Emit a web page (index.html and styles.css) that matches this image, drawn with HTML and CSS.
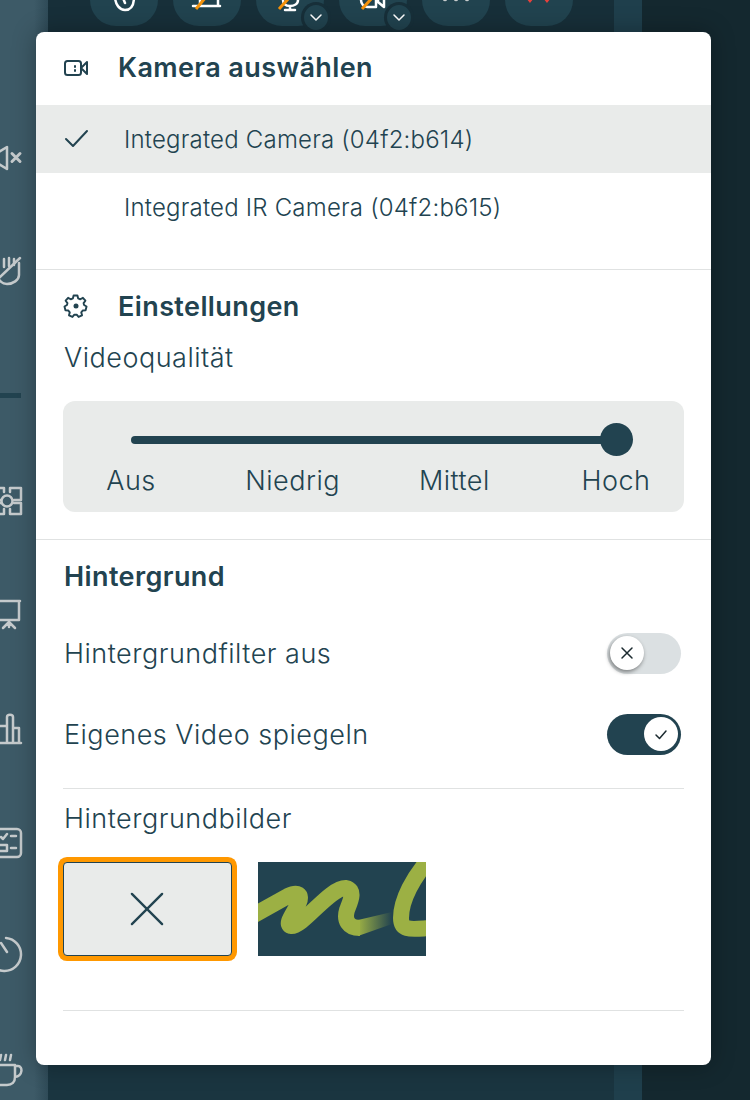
FILE: index.html
```html
<!DOCTYPE html>
<html lang="de">
<head>
    <meta charset="UTF-8">
    <title>Kamera auswählen</title>
    <link rel="stylesheet" href="styles.css">
</head>
<body>
    <div class="stage">
        <div class="sidebar">
            <svg class="side-icon mute" width="36" height="36" viewBox="0 0 36 36"><path d="M-8 14h5l10-6v22l-10-6h-5"/><path class="bold" d="M12 14.500l8 8M20 14.500l-8 8"/></svg>
            <svg class="side-icon hand" width="36" height="36" viewBox="0 0 36 36"><path d="M-3 24c0 8 4 13 10 13s12-4 12-9V16M4 20V12M9 19V11M14 18V12"/><path d="M-2 32L20 11"/></svg>
            <div class="side-bar"></div>
            <svg class="side-icon apps" width="36" height="36" viewBox="0 0 36 36"><path d="M10 10V6h11v12h-7M14 21h7v11H10v-5M-8 6H4v4M-8 18H1M-8 21H1M4 27v5H-8"/><circle cx="7" cy="19" r="5.500"/></svg>
            <svg class="side-icon screen" width="36" height="36" viewBox="0 0 36 36"><path d="M-4 5h24M19 5v19H-4"/><path d="M9 25v6M9 26l-6 6M9 26l6 6"/></svg>
            <svg class="side-icon chart" width="36" height="36" viewBox="0 0 36 36"><path d="M-2 33V16h9M7 33V7c0-3 6-3 6 0v26M13 18h6v15M-2 33h23"/></svg>
            <svg class="side-icon list" width="36" height="36" viewBox="0 0 36 36"><rect x="-10" y="5" width="31" height="28" rx="4"/><path d="M1 13l2 2 4-5M11 12h5M0 21h7v6H0M11 24h5"/></svg>
            <svg class="side-icon timer" width="36" height="36" viewBox="0 0 36 36"><path d="M6 0A16.500 16.500 0 1 1-12 16.500"/><path d="M1 5l6 9"/></svg>
            <svg class="side-icon coffee" width="36" height="36" viewBox="0 0 36 36"><path d="M-8 13h23v12c0 5-3 8-8 8H-2M15 14h3c5 0 5 10-3 11"/><path d="M1 3L0 8M6 3L5 8M11 3l-1 5"/></svg>
        </div>

        <div class="center">
            <div class="toolbar">
                <div class="tool">
                    <svg width="24" height="24" viewBox="0 0 24 24"><path d="M3 -4C3 5 8 10 13 10C19 10 22 5 22 -3M11 -2l2 5"/></svg>
                </div>
                <div class="tool">
                    <svg width="28" height="24" viewBox="0 0 28 24"><path d="M0 6h27M7 5V-3M25 5V-3"/><path class="slash" d="M3 9L13 -3"/></svg>
                </div>
                <div class="tool">
                    <svg width="24" height="24" viewBox="0 0 24 24"><path d="M7 10h10M12 6v4M5 0c0 4 3 6 7 6s8-2 8-6"/><path class="slash" d="M1 9L11 -2"/></svg>
                    <span class="tool-more"><svg width="12" height="8" viewBox="0 0 12 8"><path d="M1 1l5 5 5-5"/></svg></span>
                </div>
                <div class="tool">
                    <svg width="24" height="24" viewBox="0 0 24 24"><path d="M0 0c0 4 3 7 6 7h8M15 7V-3M17 -3v5l6 5V-3"/><path class="slash" d="M1 9L11 -2"/></svg>
                    <span class="tool-more"><svg width="12" height="8" viewBox="0 0 12 8"><path d="M1 1l5 5 5-5"/></svg></span>
                </div>
                <div class="tool">
                    <svg width="24" height="24" viewBox="0 0 24 24"><circle class="dot" cx="1" cy="-1" r="2.200"/><circle class="dot" cx="12" cy="-1" r="2.200"/><circle class="dot" cx="23" cy="-1" r="2.200"/></svg>
                </div>
                <div class="tool">
                    <svg width="24" height="24" viewBox="0 0 24 24"><path class="red" d="M-1 -2h8l-4 5zM16 -2h8l-4 5z"/></svg>
                </div>
            </div>
        </div>
        <div class="strip"></div>
        <div class="right"></div>

        <div class="panel">
            <div class="panel-head">
                <svg class="head-icon" width="24" height="24" viewBox="0 0 24 24"><rect x="1" y="5" width="16" height="14" rx="2.500"/><path d="M23 6l-6 6 6 6z"/><path d="M11 10v1M11 14v1"/></svg>
                <h2>Kamera auswählen</h2>
            </div>
            <div class="cam-row active">
                <svg class="tick" width="28" height="24" viewBox="0 0 28 24"><path d="M3 12l7 7L24 4"/></svg>
                <span>Integrated Camera (04f2:b614)</span>
            </div>
            <div class="cam-row">
                <span>Integrated IR Camera (04f2:b615)</span>
            </div>

            <hr class="line-full first-line">

            <div class="section quality-section">
                <div class="settings-head">
                    <svg class="head-icon" width="24" height="24" viewBox="0 0 24 24"><path d="M10 1.500h4l.7 3 2.300 1 2.700-1.500 2.600 3-1.900 2.500.5 2 2.600 1.500-1 4-3 .2-1.500 2 .8 3-3.600 1.700-2-2.300h-2.400l-2 2.300-3.600-1.700.8-3-1.500-2-3-.2-1-4 2.600-1.500.5-2L1.700 7l2.600-3L7 5.500l2.300-1z" transform="scale(.96)"/><circle cx="12" cy="12" r="2.500" class="filled"/></svg>
                    <h2>Einstellungen</h2>
                </div>
                <div class="label quality">Videoqualität</div>
                <div class="quality-box">
                    <div class="track"><span class="thumb"></span></div>
                    <div class="steps">
                        <span>Aus</span>
                        <span>Niedrig</span>
                        <span>Mittel</span>
                        <span>Hoch</span>
                    </div>
                </div>
            </div>

            <hr class="line-full">

            <div class="section">
                <h3>Hintergrund</h3>
                <div class="toggle-row filter-row">
                    <span class="label">Hintergrundfilter aus</span>
                    <div class="toggle">
                        <span class="knob"><svg width="14" height="14" viewBox="0 0 14 14"><path d="M2 2l10 10M12 2L2 12"/></svg></span>
                    </div>
                </div>
                <div class="toggle-row">
                    <span class="label">Eigenes Video spiegeln</span>
                    <div class="toggle on">
                        <span class="knob"><svg width="14" height="14" viewBox="0 0 14 14"><path d="M2 8l3.500 3.500L12 4"/></svg></span>
                    </div>
                </div>
                <hr class="line-inner">
                <div class="label images-label">Hintergrundbilder</div>
                <div class="tiles">
                    <div class="tile-none">
                        <svg width="34" height="34" viewBox="0 0 36 36"><path d="M2 2l32 32M34 2L2 34"/></svg>
                    </div>
                    <svg class="tile-img" width="168" height="94" viewBox="0 0 168 94">
                        <defs>
                            <linearGradient id="fade" x1="0" x2="1" y1="0" y2="0">
                                <stop offset="0" stop-color="#9cb044"/>
                                <stop offset="1" stop-color="#9cb044" stop-opacity="0"/>
                            </linearGradient>
                        </defs>
                        <rect width="168" height="94" fill="#224350"/>
                        <path class="stroke" d="M-4 53L30 34C40 29 44 33 41 40C37 50 26 62 33 64C44 66 72 25 88 26C98 28 92 40 89 48C86 58 90 66 102 66"/>
                        <path d="M100 58L134 50V62L100 74z" fill="url(#fade)"/>
                        <path class="stroke" d="M174 -6C155 15 143 38 143 56C143 70 155 67 172 66"/>
                    </svg>
                </div>
                <hr class="line-inner last-line">
            </div>
        </div>
    </div>
</body>
</html>
```

FILE: styles.css
```css
* {
    box-sizing: border-box;
}
body {
    margin: 0;
    background: #14282f;
    font-family: "Inter", "Lato", sans-serif;
    color: #224350;
}
svg {
    display: block;
    overflow: visible;
    fill: none;
    stroke-linecap: round;
    stroke-linejoin: round;
}
h2, h3 {
    margin: 0;
    font-weight: 600;
}
hr {
    border: none;
    height: 1px;
    margin: 0;
    background: #e0e2e2;
}

/* backdrop */
.stage {
    position: relative;
    display: flex;
    width: 750px;
    height: 1100px;
    overflow: hidden;
}
.sidebar {
    flex: 0 0 48px;
    display: flex;
    flex-direction: column;
    padding: 139px 27px 0 0;
    align-items: flex-end;
    background: linear-gradient(to right, #3d5a67 0, #3d5a67 34px, #2f4b58 48px);
}
.side-icon {
    flex: none;
    stroke: #c5cacc;
    stroke-width: 2.500;
    margin-right: -15px;
    margin-bottom: 78px;
}
.side-icon .bold {
    stroke-width: 3;
}
.mute {
    margin-bottom: 72px;
}
.side-bar {
    flex: none;
    width: 21px;
    height: 5px;
    margin: 32px 0 84px;
    background: #224350;
}
.center {
    flex: 0 0 566px;
    background: #1a3540;
}
.toolbar {
    height: 46px;
    padding-left: 42px;
    display: flex;
    gap: 15px;
    background: #172f39;
}
.tool {
    position: relative;
    width: 68px;
    height: 26px;
    display: flex;
    justify-content: center;
    border-radius: 0 0 30px 30px;
    background: #21434f;
}
.tool svg {
    stroke: #fff;
    stroke-width: 2.500;
}
.tool .slash {
    stroke: #f5920a;
    stroke-width: 3;
    stroke-linecap: butt;
}
.tool .red {
    fill: #e8413c;
    stroke: none;
}
.tool .dot {
    fill: #c5cacc;
    stroke: none;
}
.tool-more {
    position: absolute;
    left: 48px;
    top: 5px;
    width: 24px;
    height: 25px;
    display: flex;
    align-items: center;
    justify-content: center;
    border-radius: 50%;
    background: #21434f;
    box-shadow: 0 0 0 3px #172f39;
}
.tool .tool-more svg {
    stroke-width: 1.500;
}
.strip {
    flex: 0 0 28px;
    background: #1f3f4c;
}
.right {
    flex: 1;
    background: #14282f;
}

/* camera menu */
.panel {
    position: absolute;
    left: 36px;
    top: 32px;
    width: 675px;
    height: 1033px;
    border-radius: 8px;
    background: #fff;
    box-shadow: 0 0 24px rgba(0, 0, 0, 0.3);
}
.panel h2, .section h3 {
    font-size: 27px;
    letter-spacing: 0.4px;
}
.panel-head {
    height: 73px;
    padding: 0 0 2px 28px;
    display: flex;
    align-items: center;
}
.head-icon {
    flex: none;
    stroke: #224350;
    stroke-width: 2;
}
.head-icon .filled {
    fill: #224350;
    stroke: none;
}
.panel-head h2 {
    margin-left: 30px;
}
.cam-row {
    position: relative;
    height: 68px;
    padding-left: 88px;
    display: flex;
    align-items: center;
    font-size: 24px;
    font-weight: 300;
    letter-spacing: 0.2px;
}
.cam-row.active {
    background: #e9ebea;
}
.tick {
    position: absolute;
    left: 27px;
    top: 22px;
    stroke: #224350;
    stroke-width: 2;
}
.first-line {
    margin-top: 28px;
}
.section {
    padding: 0 27px;
}
.quality-section {
    padding-bottom: 27px;
}
.settings-head {
    height: 72px;
    display: flex;
    align-items: center;
    padding-left: 1px;
}
.settings-head h2 {
    margin-left: 30px;
}
.label, .steps {
    font-size: 27px;
    font-weight: 300;
    letter-spacing: 0.5px;
}
.label, .section h3 {
    padding-left: 1px;
}
.quality {
    height: 32px;
    line-height: 32px;
}
.quality-box {
    height: 111px;
    margin-top: 27px;
    padding-top: 35px;
    border-radius: 12px;
    background: #e9ebea;
}
.track {
    position: relative;
    height: 8px;
    margin: 0 67px 0 68px;
    border-radius: 4px;
    background: #224350;
}
.thumb {
    position: absolute;
    right: -16px;
    top: -13px;
    width: 33px;
    height: 33px;
    border-radius: 50%;
    background: #224350;
}
.steps {
    display: flex;
    justify-content: space-between;
    margin-top: 20px;
}
.steps span {
    width: 136px;
    text-align: center;
}
.section h3 {
    height: 74px;
    line-height: 74px;
}
.toggle-row {
    height: 81px;
    display: flex;
    align-items: center;
    justify-content: space-between;
    padding-right: 3px;
}
.filter-row {
    margin-top: -1px;
}
.toggle {
    position: relative;
    width: 74px;
    height: 41px;
    border-radius: 21px;
    background: #dbe0e2;
}
.toggle.on {
    background: #224350;
}
.knob {
    position: absolute;
    left: 3px;
    top: 3px;
    width: 34px;
    height: 34px;
    display: flex;
    align-items: center;
    justify-content: center;
    border-radius: 50%;
    background: #fff;
    box-shadow: -1px 2px 4px rgba(0, 0, 0, 0.45);
}
.knob svg {
    stroke: #1c2b30;
    stroke-width: 1.500;
}
.toggle.on .knob {
    left: 37px;
    box-shadow: none;
}
.line-inner {
    margin-top: 13px;
}
.images-label {
    height: 60px;
    line-height: 60px;
}
.tiles {
    display: flex;
    gap: 26px;
    margin-top: 13px;
}
.tile-none {
    width: 169px;
    height: 94px;
    padding-right: 1px;
    display: flex;
    align-items: center;
    justify-content: center;
    border: 1px solid #224350;
    border-radius: 4px;
    background: #e9ebea;
    box-shadow: 0 0 0 5px #ff9800;
}
.tile-none svg {
    stroke: #224350;
    stroke-width: 2.500;
}
.tile-img {
    overflow: hidden;
}
.tile-img .stroke {
    fill: none;
    stroke: #9cb044;
    stroke-width: 16;
    stroke-linecap: butt;
}
.last-line {
    margin-top: 54px;
}
```
